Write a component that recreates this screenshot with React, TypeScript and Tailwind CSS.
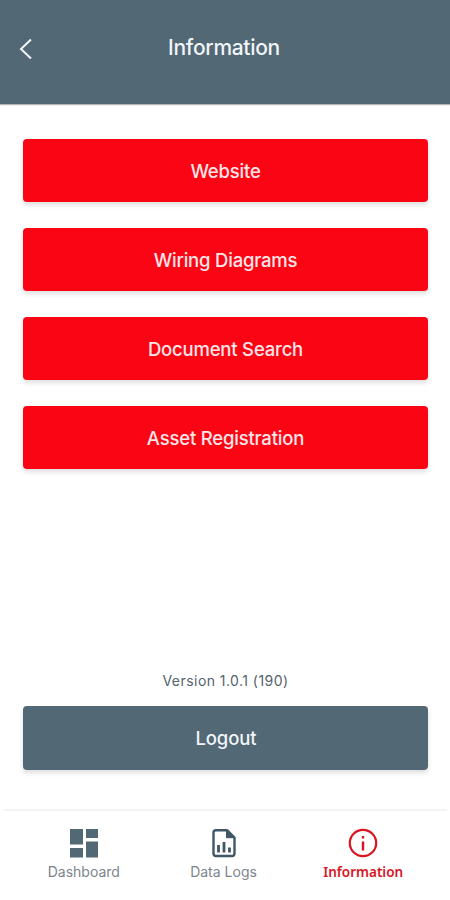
import type { ReactNode } from 'react';

interface TabProps {
  label: string;
  labelClass: string;
  children: ReactNode;
}

const links = ['Website', 'Wiring Diagrams', 'Document Search', 'Asset Registration'];

const Tab: React.FC<TabProps> = ({ label, labelClass, children }) => (
  <button className="flex flex-1 flex-col items-center">
    {children}
    <span className={`mt-1 leading-5 whitespace-nowrap ${labelClass}`}>{label}</span>
  </button>
);

const DashboardIcon = () => (
  <svg width="30" height="30" viewBox="0 0 30 30" fill="#526875">
    <path d="M1 1h13v15.5H1zM17 1h12v9H17zM1 20h13v9.5H1zM17 13.5h12v16H17z" />
  </svg>
);

const LogsIcon = () => (
  <svg width="30" height="30" viewBox="0 0 30 30" fill="none" stroke="#3f5766" strokeWidth="2.4">
    <path d="M18 2.2H7A2.5 2.5 0 0 0 4.5 4.700v20.800A2.500 2.500 0 0 0 7 28h16a2.500 2.500 0 0 0 2.500-2.500V9.700z" strokeLinejoin="round" />
    <path d="M17.500 2.200v7.500h8z" fill="#3f5766" strokeWidth="1" />
    <path d="M9.500 24.500v-7.500M15 24.500V14M20.500 24.500v-5" strokeWidth="2.800" />
  </svg>
);

const InfoIcon = () => (
  <svg width="30" height="30" viewBox="0 0 30 30" fill="none" stroke="#d9141f" strokeWidth="2.2">
    <circle cx="15" cy="15" r="13.2" />
    <path d="M15 13.500v9M15 8v2.500" strokeWidth="2.4" />
  </svg>
);

export default function App() {
  return (
    <div className="flex h-[900px] w-[450px] flex-col bg-white font-['Inter',sans-serif] font-medium">
      <header className="grid h-[104px] shrink-0 grid-cols-[48px_1fr_50px] items-center bg-[#526875] pb-[9px] text-[#f1f5f8] shadow-[0_1px_1px_rgba(60,70,80,0.4)]">
        <button className="pt-0.5 pl-[18px]" aria-label="Back">
          <svg width="15" height="22" viewBox="0 0 15 22" fill="none" stroke="currentColor" strokeWidth="2">
            <path d="M13 1.5L3 11l10 9.5" />
          </svg>
        </button>
        <h1 className="text-center text-[21px] leading-7 tracking-[-0.3px]">Information</h1>
      </header>

      <main className="flex flex-1 flex-col pt-[35px] pr-[22px] pl-[23px]">
        <div className="flex flex-col gap-[26px]">
          {links.map(label => (
            <button key={label} className="h-[63px] rounded-[4px] bg-[#fa0514] pt-0.5 text-[18.5px] tracking-[-0.2px] text-[#ffe6e8] shadow-[0_3px_5px_rgba(0,0,0,0.13)]">
              {label}
            </button>
          ))}
        </div>

        <p className="mt-auto text-center text-sm leading-5 font-normal tracking-[0.45px] text-[#56636c]">Version 1.0.1 (190)</p>
        <button className="mt-[15px] mb-[39px] h-16 rounded-[4px] bg-[#526875] pt-0.5 pl-px text-[18.5px] tracking-[-0.1px] text-[#f1f5f8] shadow-[0_3px_5px_rgba(0,0,0,0.13)]">
          Logout
        </button>
      </main>

      <nav className="mr-[3px] ml-1 flex h-[91px] shrink-0 border-t-2 border-[#f3f4f5] pt-[17px] pr-[14px] pl-[10px]">
        <Tab label="Dashboard" labelClass="text-sm font-normal text-[#7c858c]"><DashboardIcon /></Tab>
        <Tab label="Data Logs" labelClass="text-sm font-normal text-[#7c858c]"><LogsIcon /></Tab>
        <Tab label="Information" labelClass="font-['Noto_Sans',sans-serif] text-[13.5px] font-semibold text-[#d9141f]"><InfoIcon /></Tab>
      </nav>
    </div>
  );
}
